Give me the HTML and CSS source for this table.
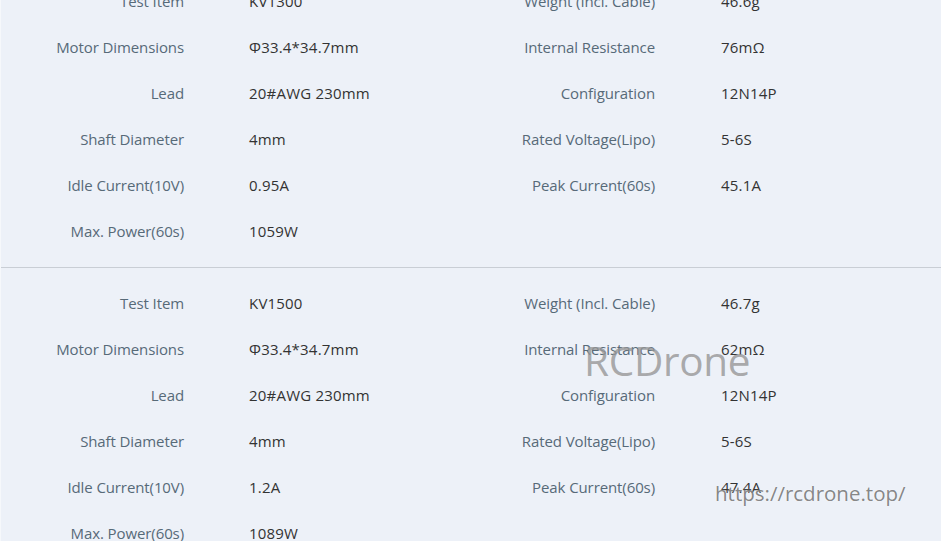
FILE: index.html
```html
<!DOCTYPE html>
<html>
<head>
<meta charset="utf-8">
<link rel="stylesheet" href="styles.css">
</head>
<body>
<div class="page">
  <section class="block first">
    <div class="spec">
      <div class="lbl">Test Item</div><div class="val">KV1300</div><div class="lbl">Weight (Incl. Cable)</div><div class="val">46.6g</div>
      <div class="lbl">Motor Dimensions</div><div class="val">Φ33.4*34.7mm</div><div class="lbl">Internal Resistance</div><div class="val">76mΩ</div>
      <div class="lbl">Lead</div><div class="val">20#AWG 230mm</div><div class="lbl">Configuration</div><div class="val">12N14P</div>
      <div class="lbl">Shaft Diameter</div><div class="val">4mm</div><div class="lbl">Rated Voltage(Lipo)</div><div class="val">5-6S</div>
      <div class="lbl">Idle Current(10V)</div><div class="val">0.95A</div><div class="lbl">Peak Current(60s)</div><div class="val">45.1A</div>
      <div class="lbl">Max. Power(60s)</div><div class="val">1059W</div><div class="lbl"></div><div class="val"></div>
    </div>
  </section>
  <section class="block second">
    <div class="spec">
      <div class="lbl">Test Item</div><div class="val">KV1500</div><div class="lbl">Weight (Incl. Cable)</div><div class="val">46.7g</div>
      <div class="lbl">Motor Dimensions</div><div class="val">Φ33.4*34.7mm</div><div class="lbl">Internal Resistance</div><div class="val">62mΩ</div>
      <div class="lbl">Lead</div><div class="val">20#AWG 230mm</div><div class="lbl">Configuration</div><div class="val">12N14P</div>
      <div class="lbl">Shaft Diameter</div><div class="val">4mm</div><div class="lbl">Rated Voltage(Lipo)</div><div class="val">5-6S</div>
      <div class="lbl">Idle Current(10V)</div><div class="val">1.2A</div><div class="lbl">Peak Current(60s)</div><div class="val">47.4A</div>
      <div class="lbl">Max. Power(60s)</div><div class="val">1089W</div><div class="lbl"></div><div class="val"></div>
    </div>
  </section>
  <div class="wm-brand">RCDrone</div>
  <div class="wm-url">https://rcdrone.top/</div>
</div>
</body>
</html>
```
FILE: styles.css
```css
html, body {
  margin: 0;
  padding: 0;
  background: #edf1f8;
  overflow: hidden;
}
body {
  font-family: "Open Sans", "Liberation Sans", sans-serif;
  font-size: 15px;
}
.page {
  position: relative;
  width: 941px;
  height: 541px;
  overflow: hidden;
  border-left: 1px solid #f6f8fb;
  box-sizing: border-box;
}
.block.first {
  margin-top: -35px;
  padding: 13px 0;
  border-bottom: 1px solid #c9ced5;
}
.block.second {
  padding: 12px 0 13px;
}
.spec {
  display: grid;
  grid-template-columns: 215px 255px 216px 254px;
  grid-auto-rows: 46px;
}
.lbl, .val {
  display: flex;
  align-items: center;
  white-space: nowrap;
}
.lbl {
  justify-content: flex-end;
  padding-right: 32px;
  color: #576a78;
  letter-spacing: -0.1px;
}
.val {
  padding-left: 33px;
  color: #333;
  letter-spacing: 0.2px;
}
.val:nth-child(4n) {
  padding-left: 34px;
}
.wm-brand {
  position: absolute;
  left: 583px;
  top: 341px;
  font-size: 40.5px;
  color: rgba(150, 150, 150, 0.8);
  letter-spacing: -0.3px;
  line-height: 1;
}
.wm-url {
  position: absolute;
  left: 714px;
  top: 483px;
  font-size: 20.5px;
  color: rgba(120, 120, 120, 0.9);
  line-height: 1;
  text-shadow: 0 0 2px rgba(255,255,255,0.6);
}
```
